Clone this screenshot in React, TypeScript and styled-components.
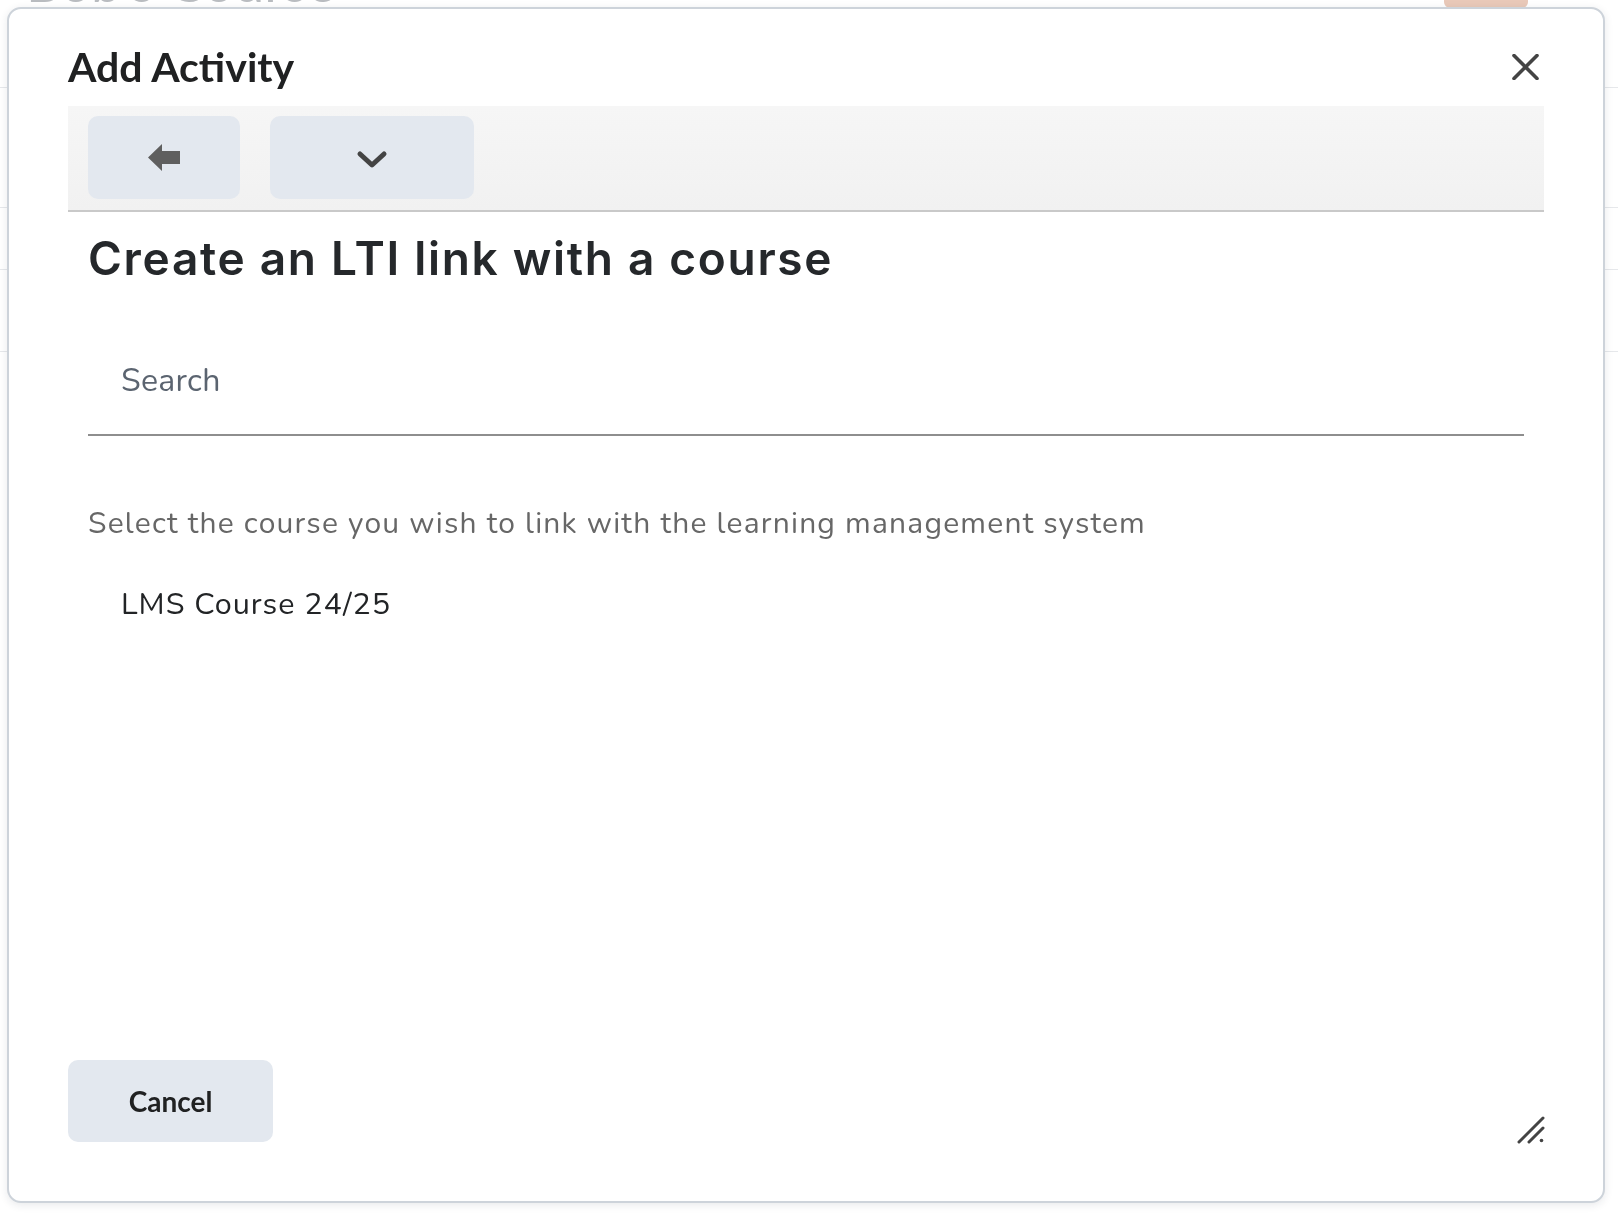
import React from "react";
import styled, { createGlobalStyle } from "styled-components";

const Global = createGlobalStyle`
  html, body { margin: 0; padding: 0; background: #ffffff; }
  body { font-family: "Lato", "Noto Sans", sans-serif; overflow: hidden; }
  * { box-sizing: border-box; }
`;

const Page = styled.div`
  width: 1618px;
  height: 1216px;
  background: #ffffff;
  overflow: hidden;
`;

const PageHeader = styled.div`
  height: 88px;
  border-bottom: 1px solid #e6e8eb;
  display: flex;
  align-items: flex-start;
  justify-content: space-between;
  padding: 0 20px 0 26px;
`;

const PageTitle = styled.div`
  font-family: "Lato", sans-serif;
  font-size: 54px;
  line-height: 1;
  color: #b9bcc0;
  margin-top: -45px;
`;

const Avatar = styled.div`
  width: 84px;
  height: 40px;
  margin-top: -32px;
  margin-right: 70px;
  background: #e9c9b9;
  border-radius: 6px;
`;

const PageRow = styled.div<{ $h: number }>`
  height: ${(p) => p.$h}px;
  border-bottom: 1px solid #e6e8eb;
`;

const Dialog = styled.div`
  position: fixed;
  left: 7px;
  top: 7px;
  width: 1598px;
  height: 1196px;
  background: #ffffff;
  border: 2px solid #cdd3da;
  border-radius: 14px;
  box-shadow: 0 2px 8px rgba(30, 40, 60, 0.1);
  display: flex;
  flex-direction: column;
  padding: 0 59px 59px;
`;

const Header = styled.div`
  height: 97px;
  padding-top: 18px;
  display: flex;
  align-items: center;
  justify-content: space-between;
`;

const Title = styled.h1`
  margin: 0;
  font-family: "Lato", sans-serif;
  font-weight: 700;
  font-size: 41px;
  line-height: 48px;
  color: #202122;
`;

const CloseButton = styled.button`
  width: 40px;
  height: 40px;
  border: none;
  background: transparent;
  padding: 0;
  margin-right: -1px;
  display: flex;
  align-items: center;
  justify-content: center;
  cursor: pointer;
`;

const Toolbar = styled.div`
  height: 106px;
  background: linear-gradient(#f6f6f6, #f1f1f1);
  border-bottom: 2px solid #c9c9c9;
  padding: 10px 20px;
  display: flex;
  gap: 30px;
`;

const ToolButton = styled.button<{ $w: number; $shift?: number }>`
  width: ${(p) => p.$w}px;
  height: 83px;
  border: none;
  border-radius: 10px;
  background: #e3e8ef;
  display: flex;
  align-items: center;
  justify-content: center;
  padding: ${(p) => p.$shift || 0}px 0 0;
  cursor: pointer;
`;

const Body = styled.div`
  flex: 1;
  display: flex;
  flex-direction: column;
  padding: 0 20px;
`;

const Heading = styled.h2`
  margin: 18px 0 0;
  font-family: "Inter", "Noto Sans", sans-serif;
  font-weight: 600;
  font-size: 46px;
  line-height: 56px;
  color: #25282b;
  letter-spacing: 1.7px;
`;

const SearchInput = styled.input`
  margin-top: 40px;
  height: 110px;
  border: none;
  border-bottom: 2px solid #8e8e8e;
  outline: none;
  padding: 0 33px;
  font-family: "Nunito", "Noto Sans", sans-serif;
  font-size: 32px;
  letter-spacing: 0.3px;
  color: #222;
  background: transparent;
  &::placeholder {
    color: #5b6470;
  }
`;

const Description = styled.p`
  margin: 68px 0 0;
  font-family: "Nunito", "Noto Sans", sans-serif;
  font-size: 30px;
  letter-spacing: 1.2px;
  line-height: 40px;
  color: #676767;
`;

const CourseItem = styled.div`
  margin-top: 40px;
  padding-left: 33px;
  font-family: "Nunito", "Noto Sans", sans-serif;
  font-size: 30.5px;
  letter-spacing: 1px;
  line-height: 40px;
  color: #222426;
  cursor: pointer;
`;

const Footer = styled.div`
  display: flex;
`;

const CancelButton = styled.button`
  width: 205px;
  height: 82px;
  border: none;
  border-radius: 10px;
  background: #e3e8ef;
  font-family: "Lato", sans-serif;
  font-weight: 700;
  font-size: 28px;
  color: #202122;
  cursor: pointer;
`;

const ResizeGrip = styled.div`
  position: absolute;
  right: 58px;
  bottom: 57px;
  width: 28px;
  height: 28px;
`;

function BackArrow() {
  return (
    <svg width="32" height="27" viewBox="0 0 32 27">
      <path d="M0 13.5 L14 0 L14 7 L32 7 L32 20 L14 20 L14 27 Z" fill="#5f5f5f" />
    </svg>
  );
}

function Chevron() {
  return (
    <svg width="32" height="20" viewBox="0 0 32 20">
      <polyline
        points="4,4 16,15 28,4"
        fill="none"
        stroke="#444"
        strokeWidth="5"
        strokeLinecap="round"
        strokeLinejoin="round"
      />
    </svg>
  );
}

function CloseIcon() {
  return (
    <svg width="27" height="26" viewBox="0 0 27 26">
      <path d="M2 1.5 L25 24.5 M25 1.5 L2 24.5" stroke="#444" strokeWidth="3.6" strokeLinecap="round" />
    </svg>
  );
}

function GripIcon() {
  return (
    <svg width="28" height="28" viewBox="0 0 28 28">
      <path d="M2 26 L26 2 M12 26 L26 12" stroke="#444" strokeWidth="3" strokeLinecap="round" />
      <circle cx="24.5" cy="24.5" r="1.8" fill="#444" />
    </svg>
  );
}

export default function App() {
  return (
    <>
      <Global />
      <Page>
        <PageHeader>
          <PageTitle>Bob's Course</PageTitle>
          <Avatar />
        </PageHeader>
        <PageRow $h={120} />
        <PageRow $h={62} />
        <PageRow $h={82} />
      </Page>
      <Dialog role="dialog" aria-label="Add Activity">
        <Header>
          <Title>Add Activity</Title>
          <CloseButton aria-label="Close">
            <CloseIcon />
          </CloseButton>
        </Header>
        <Toolbar>
          <ToolButton $w={152} aria-label="Back">
            <BackArrow />
          </ToolButton>
          <ToolButton $w={204} $shift={4} aria-label="More">
            <Chevron />
          </ToolButton>
        </Toolbar>
        <Body>
          <Heading>Create an LTI link with a course</Heading>
          <SearchInput placeholder="Search" />
          <Description>Select the course you wish to link with the learning management system</Description>
          <CourseItem>LMS Course 24/25</CourseItem>
        </Body>
        <Footer>
          <CancelButton>Cancel</CancelButton>
        </Footer>
        <ResizeGrip>
          <GripIcon />
        </ResizeGrip>
      </Dialog>
    </>
  );
}
